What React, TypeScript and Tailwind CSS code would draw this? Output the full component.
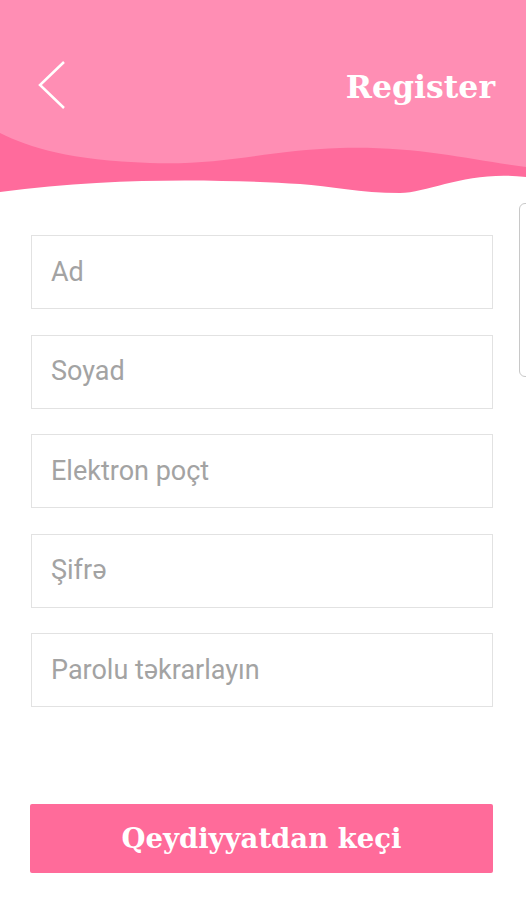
import React from "react";

const fields = ["Ad", "Soyad", "Elektron poçt", "Şifrə", "Parolu təkrarlayın"];

export default function App() {
  return (
    <div className="relative w-[526px] h-[900px] bg-white overflow-hidden">
      <div className="relative h-[200px]">
        <svg className="absolute inset-0" width="526" height="200" viewBox="0 0 526 200">
          <rect x="0" y="0" width="526" height="200" fill="#ffffff" />
          <path
            d="M0 0 H526 V177 C470 170 430 192 400 193 C360 193 330 186 300 184 C230 180 120 176 0 192 Z"
            fill="#ff6b9c"
          />
          <path
            d="M0 0 H526 V167 C470 160 420 146 340 148 C270 150 220 166 150 163 C70 160 30 148 0 133 Z"
            fill="#ff8eb4"
          />
        </svg>
        <div className="relative flex items-center justify-between pl-[38px] pr-[31px] pt-[60px]">
          <svg width="28" height="50" viewBox="0 0 28 50">
            <path d="M26 2 L2 25 L26 48" fill="none" stroke="#ffffff" strokeWidth="2.5" />
          </svg>
          <span
            className="text-white font-bold text-[31.5px] leading-none mt-[4px]"
            style={{ fontFamily: '"DejaVu Serif", serif' }}
          >
            Register
          </span>
        </div>
      </div>

      <div className="absolute right-[-8px] top-[203px] w-[15px] h-[174px] rounded-[6px] border border-[#c8c8c8] bg-white" />

      <div className="flex flex-col gap-[25.5px] pl-[31px] pr-[33px] pt-[35px]">
        {fields.map((f) => (
          <div
            key={f}
            className="h-[74px] border border-[#e2e2e2] flex items-center pl-[19px] text-[27px] text-[#a3a3a3]"
            style={{ fontFamily: "Roboto, sans-serif" }}
          >
            {f}
          </div>
        ))}
      </div>

      <div className="pl-[30px] pr-[33px] pt-[97px]">
        <div
          className="h-[69px] rounded-[2px] bg-[#ff6b9a] flex items-center justify-center text-white font-bold text-[27.5px]"
          style={{ fontFamily: '"DejaVu Serif", serif' }}
        >
          Qeydiyyatdan keçi
        </div>
      </div>
    </div>
  );
}
